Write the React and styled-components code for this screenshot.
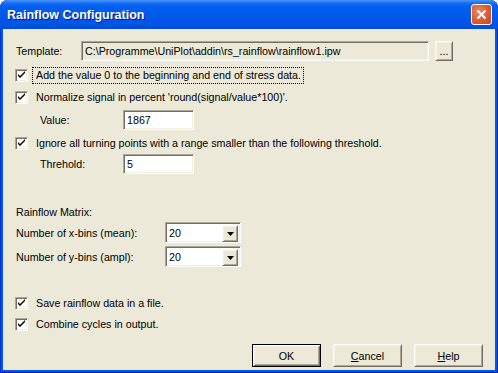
import React from 'react';
import styled, { createGlobalStyle } from 'styled-components';

const GlobalStyle = createGlobalStyle`
  html, body {
    margin: 0;
    padding: 0;
    background: #ffffff;
  }
  body {
    font-family: "Liberation Sans", Arial, sans-serif;
    font-size: 10.7px;
    color: #000;
  }
`;

export default function App() {
  return (
    <>
      <GlobalStyle />
      <Window>
        <TitleBar>
          <Title>Rainflow Configuration</Title>
          <CloseButton>
            <svg width="11" height="11" viewBox="0 0 11 11">
              <path d="M1.5 1.5 L9.5 9.5 M9.5 1.5 L1.5 9.5" stroke="#fff" strokeWidth="2" />
            </svg>
          </CloseButton>
        </TitleBar>

        <Client>
          <FieldRow mt={12} indent={13}>
            <Label width={65}>Template:</Label>
            <TextBox width={348} readOnly>C:\Programme\UniPlot\addin\rs_rainflow\rainflow1.ipw</TextBox>
            <SmallButton>...</SmallButton>
          </FieldRow>

          <CheckRow mt={6}>
            <CheckBox checked />
            <CheckLabel focused>Add the value 0 to the beginning and end of stress data.</CheckLabel>
          </CheckRow>
          <CheckRow mt={5}>
            <CheckBox checked />
            <CheckLabel>Normalize signal in percent 'round(signal/value*100)'.</CheckLabel>
          </CheckRow>
          <FieldRow mt={4} indent={37}>
            <Label width={83}>Value:</Label>
            <TextBox width={71}>1867</TextBox>
          </FieldRow>

          <CheckRow mt={5}>
            <CheckBox checked />
            <CheckLabel>Ignore all turning points with a range smaller than the following threshold.</CheckLabel>
          </CheckRow>
          <FieldRow mt={2} indent={37}>
            <Label width={83}>Threhold:</Label>
            <TextBox width={71}>5</TextBox>
          </FieldRow>

          <SectionLabel mt={32}>Rainflow Matrix:</SectionLabel>
          <FieldRow mt={3} indent={13}>
            <Label width={149}>Number of x-bins (mean):</Label>
            <Combo value="20" />
          </FieldRow>
          <FieldRow mt={3} indent={13}>
            <Label width={149}>Number of y-bins (ampl):</Label>
            <Combo value="20" />
          </FieldRow>

          <CheckRow mt={28}>
            <CheckBox checked />
            <CheckLabel>Save rainflow data in a file.</CheckLabel>
          </CheckRow>
          <CheckRow mt={4}>
            <CheckBox checked />
            <CheckLabel>Combine cycles in output.</CheckLabel>
          </CheckRow>

          <ButtonBar>
            <PushButton isDefault>OK</PushButton>
            <PushButton><u>C</u>ancel</PushButton>
            <PushButton><u>H</u>elp</PushButton>
          </ButtonBar>
        </Client>
      </Window>
    </>
  );
}

function CheckBox({ checked }) {
  return (
    <Box>
      {checked && (
        <svg width="9" height="9" viewBox="0 0 9 9">
          <path d="M1 3 L1 5 L3 7 L8 2 L8 0 L3 5 Z" fill="#000" />
        </svg>
      )}
    </Box>
  );
}

function Combo({ value }) {
  return (
    <ComboFrame>
      <ComboText>{value}</ComboText>
      <ComboArrow>
        <svg width="7" height="4" viewBox="0 0 7 4">
          <path d="M0 0 H7 L3.5 4 Z" fill="#000" />
        </svg>
      </ComboArrow>
    </ComboFrame>
  );
}

const Window = styled.div`
  width: 498px;
  height: 373px;
  box-sizing: border-box;
  display: flex;
  flex-direction: column;
  padding: 0 3px 3px;
  background: #0058ea;
  border-radius: 8px 8px 0 0;
  box-shadow: inset 1px 0 #0831d9, inset -1px 0 #001ea0, inset 0 -1px #001ea0;
`;

const TitleBar = styled.div`
  height: 29px;
  margin: 0 -3px;
  flex: none;
  display: flex;
  align-items: center;
  justify-content: space-between;
  padding: 0 6px 0 7px;
  border-radius: 8px 8px 0 0;
  background: linear-gradient(
    to bottom,
    #4a95f8 0px,
    #1a6ff5 3px,
    #0060f0 6px,
    #0058e8 18px,
    #0054e3 25px,
    #004ad8 29px
  );
`;

const Title = styled.div`
  font-family: "Liberation Sans", Arial, sans-serif;
  font-weight: bold;
  font-size: 12.5px;
  color: #ffffff;
  text-shadow: 1px 1px #0a1883;
`;

const CloseButton = styled.div`
  width: 21px;
  height: 21px;
  box-sizing: border-box;
  border: 1px solid #ffffff;
  border-radius: 3px;
  display: flex;
  align-items: center;
  justify-content: center;
  background: radial-gradient(circle at 35% 35%, #e98a62 0%, #e0603a 45%, #c7431b 100%);
`;

const Client = styled.div`
  flex: 1;
  display: flex;
  flex-direction: column;
  background: #ece9d8;
`;

const FieldRow = styled.div`
  display: flex;
  align-items: center;
  margin-top: ${(p) => p.mt}px;
  padding-left: ${(p) => p.indent}px;
`;

const Label = styled.div`
  width: ${(p) => p.width}px;
  flex: none;
  white-space: nowrap;
`;

const sunken = `
  box-sizing: border-box;
  border: 1px solid;
  border-color: #aca899 #ffffff #ffffff #aca899;
  box-shadow: inset 1px 1px #716f64, inset -1px -1px #f1efe2;
`;

const raised = `
  box-sizing: border-box;
  border: 1px solid;
  border-color: #ffffff #716f64 #716f64 #ffffff;
  box-shadow: inset 1px 1px #f1efe2, inset -1px -1px #aca899;
`;

const TextBox = styled.div`
  ${sunken}
  width: ${(p) => p.width}px;
  height: 20px;
  padding: 0 0 0 3px;
  line-height: 18px;
  white-space: nowrap;
  overflow: hidden;
  background: ${(p) => (p.readOnly ? '#ece9d8' : '#ffffff')};
`;

const SmallButton = styled.div`
  ${raised}
  width: 18px;
  height: 20px;
  margin-left: 6px;
  display: flex;
  align-items: center;
  justify-content: center;
  line-height: 18px;
  background: #ece9d8;
`;

const CheckRow = styled.div`
  display: flex;
  align-items: center;
  height: 17px;
  margin-top: ${(p) => p.mt}px;
  padding-left: 12px;
`;

const Box = styled.span`
  ${sunken}
  width: 13px;
  height: 13px;
  flex: none;
  display: flex;
  align-items: center;
  justify-content: center;
  background: #ffffff;
`;

const CheckLabel = styled.span`
  margin-left: 4px;
  padding: 0 2px 0 3px;
  line-height: 15px;
  white-space: nowrap;
  border: 1px dotted ${(p) => (p.focused ? '#000' : 'transparent')};
`;

const SectionLabel = styled.div`
  margin-top: ${(p) => p.mt}px;
  padding-left: 13px;
  line-height: 13px;
`;

const ComboFrame = styled.div`
  ${sunken}
  width: 76px;
  height: 21px;
  display: flex;
  padding: 2px;
  background: #ffffff;
`;

const ComboText = styled.div`
  flex: 1;
  padding-left: 1px;
  line-height: 17px;
`;

const ComboArrow = styled.div`
  ${raised}
  width: 16px;
  height: 17px;
  display: flex;
  align-items: center;
  justify-content: center;
  background: #ece9d8;
`;

const ButtonBar = styled.div`
  display: flex;
  justify-content: flex-end;
  gap: 12px;
  margin-top: 11px;
  padding-right: 12px;
`;

const PushButton = styled.div`
  ${raised}
  width: 69px;
  height: 23px;
  display: flex;
  align-items: center;
  justify-content: center;
  background: #ece9d8;
  ${(p) =>
    p.isDefault &&
    `
    border: 1px solid #000;
    box-shadow: inset 1px 1px #fff, inset -1px -1px #716f64, inset 2px 2px #f1efe2, inset -2px -2px #aca899;
  `}

  u {
    text-decoration: underline;
  }
`;
